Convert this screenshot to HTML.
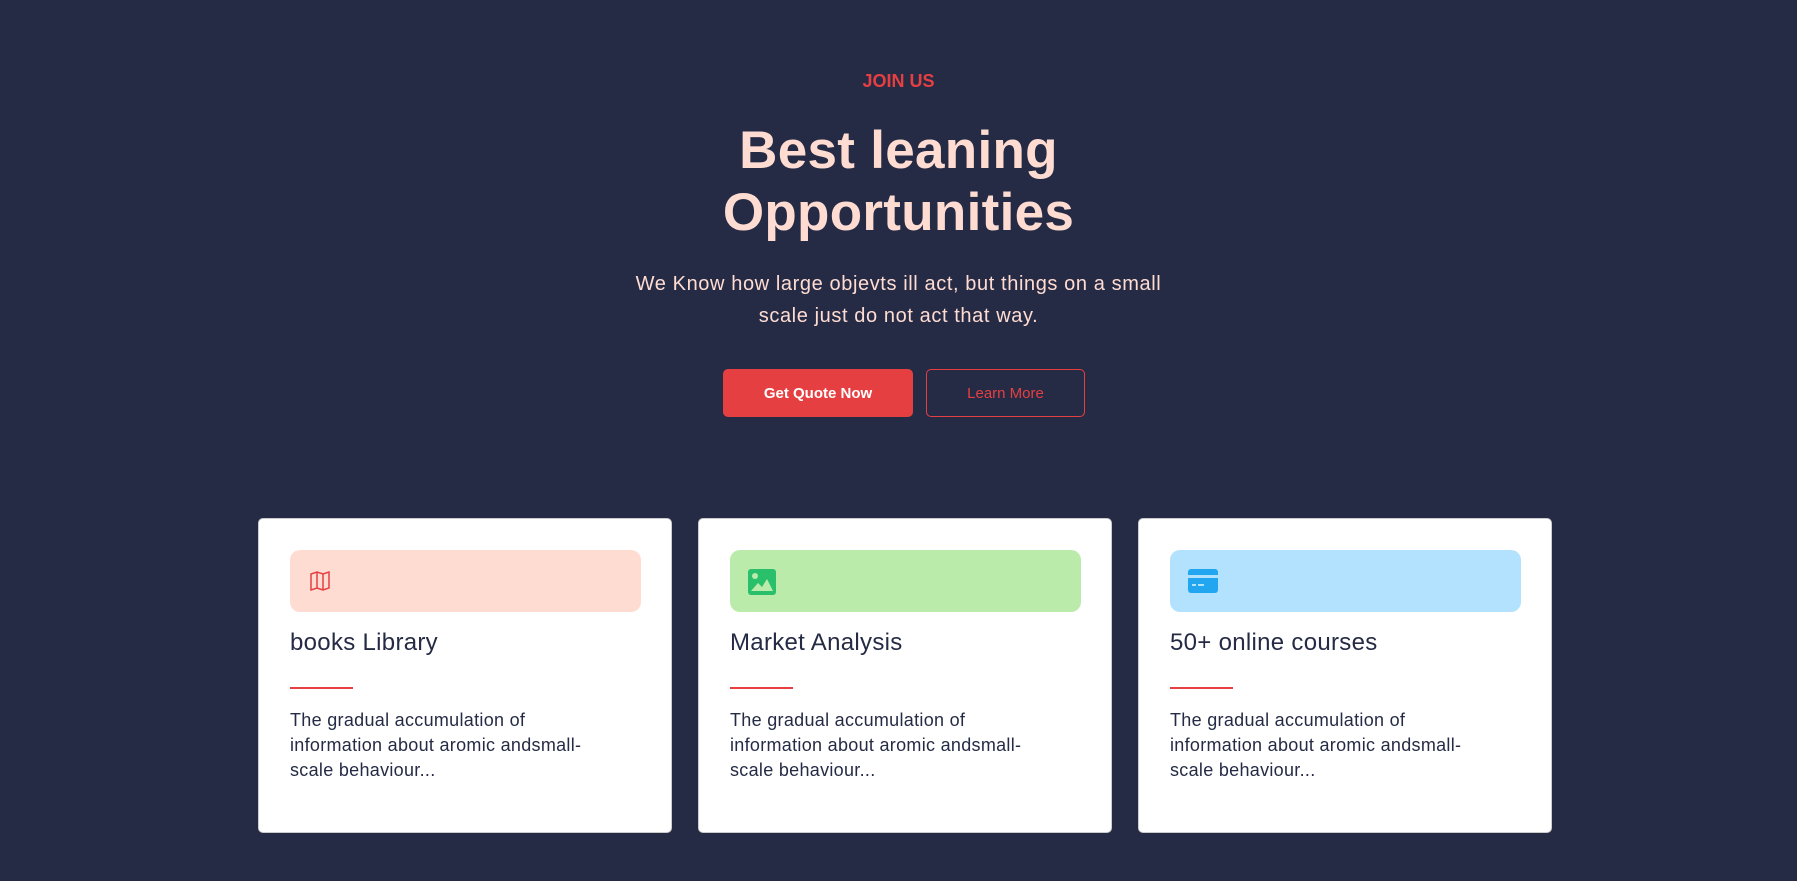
<!DOCTYPE html>
<html><head><meta charset="utf-8"><style>
*{margin:0;padding:0;box-sizing:border-box}
body{width:1797px;height:881px;background:#252b45;font-family:"Liberation Sans",sans-serif;position:relative;overflow:hidden}
.a{position:absolute;left:0;width:1797px;text-align:center}
.join{top:71px;color:#e63f41;font-weight:bold;font-size:18px}
h1{position:absolute;left:0;width:1797px;text-align:center;top:120px;color:#ffdcd2;font-size:53px;line-height:62px;font-weight:bold;letter-spacing:0.3px}
.sub{top:268px;color:#ffdcd2;font-size:20px;line-height:32px;letter-spacing:0.6px}
.btn{position:absolute;top:369px;height:48px;border-radius:5px;font-size:15px;font-weight:bold;display:flex;align-items:center;justify-content:center}
.b1{left:723px;width:190px;background:#e63f41;color:#fff}
.b2{left:926px;width:159px;border:1px solid #e63f41;color:#e63f41;font-weight:normal}
.card{position:absolute;top:518px;width:414px;height:315px;background:#fff;border-radius:5px;border:1px solid #ccc}
.ib{position:absolute;left:31px;top:31px;width:351px;height:62px;border-radius:10px}
.ib svg{position:absolute;left:18px;top:19px}
.t{position:absolute;left:31px;top:110px;font-size:24px;color:#252b45;letter-spacing:0.3px}
.ln{position:absolute;left:31px;top:168px;width:63px;height:2px;background:#e63f41}
.p{position:absolute;left:31px;top:189px;width:360px;font-size:18px;line-height:25px;color:#252b45;letter-spacing:0.3px;white-space:nowrap}
</style></head><body>
<div class="a join">JOIN US</div>
<h1>Best leaning<br>Opportunities</h1>
<div class="a sub">We Know how large objevts ill act, but things on a small<br>scale just do not act that way.</div>
<div class="btn b1">Get Quote Now</div>
<div class="btn b2">Learn More</div>

<div class="card" style="left:258px"><div class="ib" style="background:#ffdcd2"><svg width="24" height="24" viewBox="0 0 24 24" fill="none" stroke="#e63f41" stroke-width="1.5"><path d="M3 5l6-2 6 2 6-2v16l-6 2-6-2-6 2z M9 3v16 M15 5v16"/></svg></div>
<div class="t">books Library</div><div class="ln"></div>
<div class="p">The gradual accumulation of<br>information about aromic andsmall-<br>scale behaviour...</div></div>

<div class="card" style="left:698px"><div class="ib" style="background:#bbebaa"><svg width="28" height="26" viewBox="0 0 28 26"><rect x="0" y="0" width="28" height="26" rx="3" fill="#2ac06b"/><circle cx="7" cy="7" r="3" fill="#bbebaa"/><path d="M3 22l7-8 4 4 5-8 6 12z" fill="#bbebaa"/></svg></div>
<div class="t">Market Analysis</div><div class="ln"></div>
<div class="p">The gradual accumulation of<br>information about aromic andsmall-<br>scale behaviour...</div></div>

<div class="card" style="left:1138px"><div class="ib" style="background:#b2e2fe"><svg width="30" height="24" viewBox="0 0 30 24"><rect x="0" y="0" width="30" height="24" rx="3" fill="#23a6f0"/><rect x="0" y="6" width="30" height="3" fill="#b2e2fe"/><rect x="4" y="15" width="4" height="2" fill="#b2e2fe"/><rect x="10" y="15" width="6" height="2" fill="#b2e2fe"/></svg></div>
<div class="t">50+ online courses</div><div class="ln"></div>
<div class="p">The gradual accumulation of<br>information about aromic andsmall-<br>scale behaviour...</div></div>
</body></html>
